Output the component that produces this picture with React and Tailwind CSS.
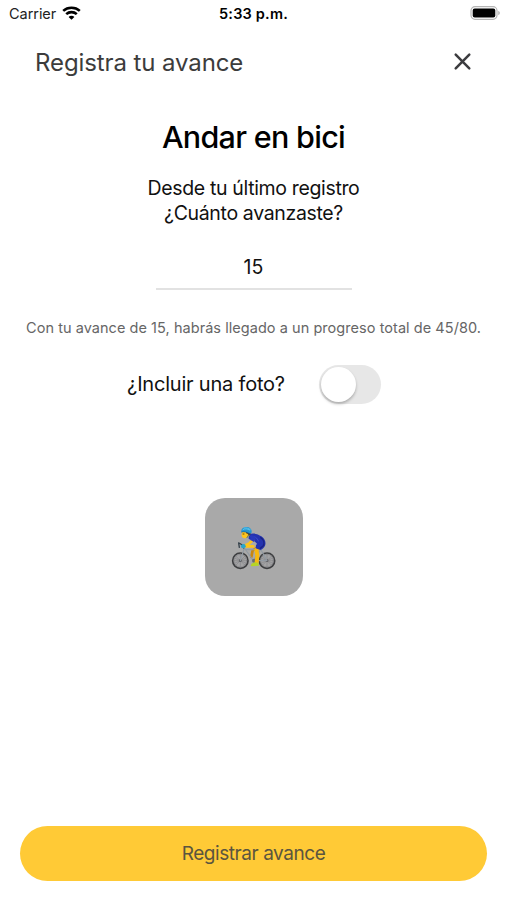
import { useState } from 'react';

function StatusBar() {
  return (
    <div className="grid h-7 grid-cols-3 items-center pl-[9px] pr-[6px] text-black">
      <div className="flex items-center gap-[6px]">
        <span className="text-[14.5px] leading-7 tracking-[-0.05px] text-[#222]">Carrier</span>
        <svg className="mb-[2px] h-[14px] w-[19px]" viewBox="0 0 19 14" fill="none" stroke="currentColor" strokeWidth="2.6">
          <path d="M1.2 4.9C5.8.7 13.2.7 17.8 4.9" />
          <path d="M4.2 8.1c3-2.7 7.6-2.7 10.6 0" />
          <path d="M9.5 13.8 6.6 10.9c1.6-1.4 4.2-1.4 5.8 0z" fill="currentColor" stroke="none" />
        </svg>
      </div>
      <p className="-ml-[3px] text-center text-[14.5px] font-semibold leading-7 tracking-[0.2px]">5:33 p.m.</p>
      <svg className="mb-[2px] h-[14px] w-[31px] justify-self-end" viewBox="0 0 31 14">
        <rect x="1" y="0.7" width="26" height="12.6" rx="4" fill="#fff" stroke="#b5b5b5" strokeWidth="1.2" />
        <rect x="2.7" y="2.4" width="22.6" height="9.2" rx="2" fill="#000" />
        <path d="M28.3 4.8c2 .8 2 3.6 0 4.4z" fill="#aaa" />
      </svg>
    </div>
  );
}

function Wheel({ cx }) {
  return (
    <g>
      <circle cx={cx} cy="122" r="23" fill="#a3a3a4" stroke="#3d3e40" strokeWidth="5" />
      <circle cx={cx} cy="122" r="19" fill="none" stroke="#7c7d80" strokeWidth="1.5" />
      <g stroke="#77787b" strokeWidth="1.3">
        <path d={`M${cx - 20} 122h40M${cx} 102v40`} />
        <path d={`M${cx - 14} 108l28 28M${cx + 14} 108l-28 28`} />
        <path d={`M${cx - 18} 114l36 16M${cx + 18} 114l-36 16`} />
      </g>
      <circle cx={cx} cy="122" r="4" fill="#58595c" />
    </g>
  );
}

function Cyclist() {
  return (
    <svg className="size-14" viewBox="0 0 168 168" strokeLinecap="round" strokeLinejoin="round">
      <Wheel cx={43} />
      <Wheel cx={123} />
      {/* far leg */}
      <path d="M104 78 80 91l-4 20" fill="none" stroke="#c98712" strokeWidth="8" />
      {/* frame */}
      <path d="M43 122 55 84l27 38h41L104 88 60 89M82 122l22-34" fill="none" stroke="#929ba4" strokeWidth="3.5" />
      <path d="M53 84l-4-9-10-6M38 69l2 13" fill="none" stroke="#34404a" strokeWidth="4" />
      <circle cx="84" cy="122" r="6" fill="#6a6d70" />
      {/* near leg and shoe */}
      <path d="M108 78 91 89l3 17-2 22" fill="none" stroke="#f8b80f" strokeWidth="12" />
      <path d="M77 131c4-4 9-2 13-4l7 2 2 8-22 2c-4 0-3-5 0-8z" fill="#b6d426" />
      {/* jersey and shorts */}
      <path d="M68 44c10-6 27-3 38 5 11 8 15 19 11 28-3 7-9 11-14 13l-14-5 1-9 3-5-9-9-16-5z" fill="#2433b0" />
      <path d="M104 53c9 6 12 16 8 24l-9 8" fill="none" stroke="#1a2384" strokeWidth="4" />
      <path d="M75 49c12-1 19 5 22 14" fill="none" stroke="#3d50cf" strokeWidth="3" />
      {/* arm and glove */}
      <path d="M83 58 70 70 56 77M58 79h24" fill="none" stroke="#fdc31a" strokeWidth="8" />
      <path d="M74 48c6-3 14 0 15 6l-5 12-11-6z" fill="#2839bd" />
      <path d="m57 73-7-1-6 5 3 7 7 1 6-5z" fill="#28a5cf" />
      {/* head */}
      <path d="M49 35c-3 6-3 12 0 17 3 3 9 4 13 1l10-7 1-14-15-3z" fill="#ffc51c" />
      <path d="M60 34h14c2 6 0 10-5 14-2-5-5-8-9-8z" fill="#573a20" />
      <path d="M51 42h3" stroke="#51330c" strokeWidth="2.5" />
      <path d="M46 36c-1-10 6-15 15-15 10 0 17 6 16 16-1 4-5 5-8 3-7-4-14-5-23-4z" fill="#2495cf" />
      <path d="M51 29c6-4 13-3 20 1M54 24c7-1 13 0 19 5" fill="none" stroke="#62c9ed" strokeWidth="2.5" />
      <path d="M47 36c8-2 15 0 23 5l-7 12" fill="none" stroke="#195885" strokeWidth="2" />
    </svg>
  );
}

export default function App() {
  const [amount, setAmount] = useState('15');
  const [includePhoto, setIncludePhoto] = useState(false);

  return (
    <div className="flex h-[900px] w-[507px] flex-col bg-white font-['Inter','Liberation_Sans',sans-serif] text-[#111]">
      <StatusBar />

      <header className="flex h-[70px] items-center justify-between pl-[35px] pr-[35px]">
        <h1 className="text-[24px] leading-[30px] tracking-[-0.1px] text-[#3c3c3c]">Registra tu avance</h1>
        <button aria-label="Cerrar" className="pb-[3px]">
          <svg className="size-[19px]" viewBox="0 0 19 19" stroke="#3c3c3f" strokeWidth="2.5" strokeLinecap="round">
            <path d="m2.7 2.7 13.6 13.6M16.3 2.7 2.7 16.3" />
          </svg>
        </button>
      </header>

      <main className="flex flex-1 flex-col items-center">
        <h2 className="mt-[20px] text-[30.5px] font-medium leading-[38px] tracking-[-0.7px] text-black">Andar en bici</h2>
        <p className="mt-[20px] text-center text-[19.5px] leading-[25px] tracking-[-0.35px]">
          Desde tu último registro
          <br />
          ¿Cuánto avanzaste?
        </p>
        <input
          className="mt-[20px] h-[44px] w-[196px] border-b-2 border-[#e2e2e2] pb-px text-center text-[19.5px] outline-none"
          inputMode="numeric"
          value={amount}
          onChange={(e) => setAmount(e.target.value)}
        />
        <p className="mt-[28px] whitespace-nowrap text-[14.5px] leading-5 tracking-[0.05px] text-[#666]">
          Con tu avance de 15, habrás llegado a un progreso total de 45/80.
        </p>

        <div className="mt-[26px] flex items-center gap-[34px] pl-px">
          <span className="text-[20px] leading-6 tracking-[-0.2px]">¿Incluir una foto?</span>
          <button
            role="switch"
            aria-checked={includePhoto}
            aria-label="Incluir una foto"
            onClick={() => setIncludePhoto(!includePhoto)}
            className={`mt-px flex h-[39px] w-[62px] rounded-full p-[2px] ${includePhoto ? 'justify-end bg-[#ffca36]' : 'bg-[#e7e7e7]'}`}
          >
            <span className="size-[35px] rounded-full bg-white shadow-[0_2px_3px_rgba(0,0,0,0.25)]" />
          </button>
        </div>

        <div className="mt-[94px] flex size-[98px] justify-center rounded-[20px] bg-[#a9a9a9] pt-[22px]">
          <Cyclist />
        </div>
      </main>

      <footer className="px-5 pb-[19px]">
        <button className="h-[55px] w-full rounded-full bg-[#ffca36] pt-[2px] text-[19px] tracking-[-0.44px] text-[#5b553f]">
          Registrar avance
        </button>
      </footer>
    </div>
  );
}
